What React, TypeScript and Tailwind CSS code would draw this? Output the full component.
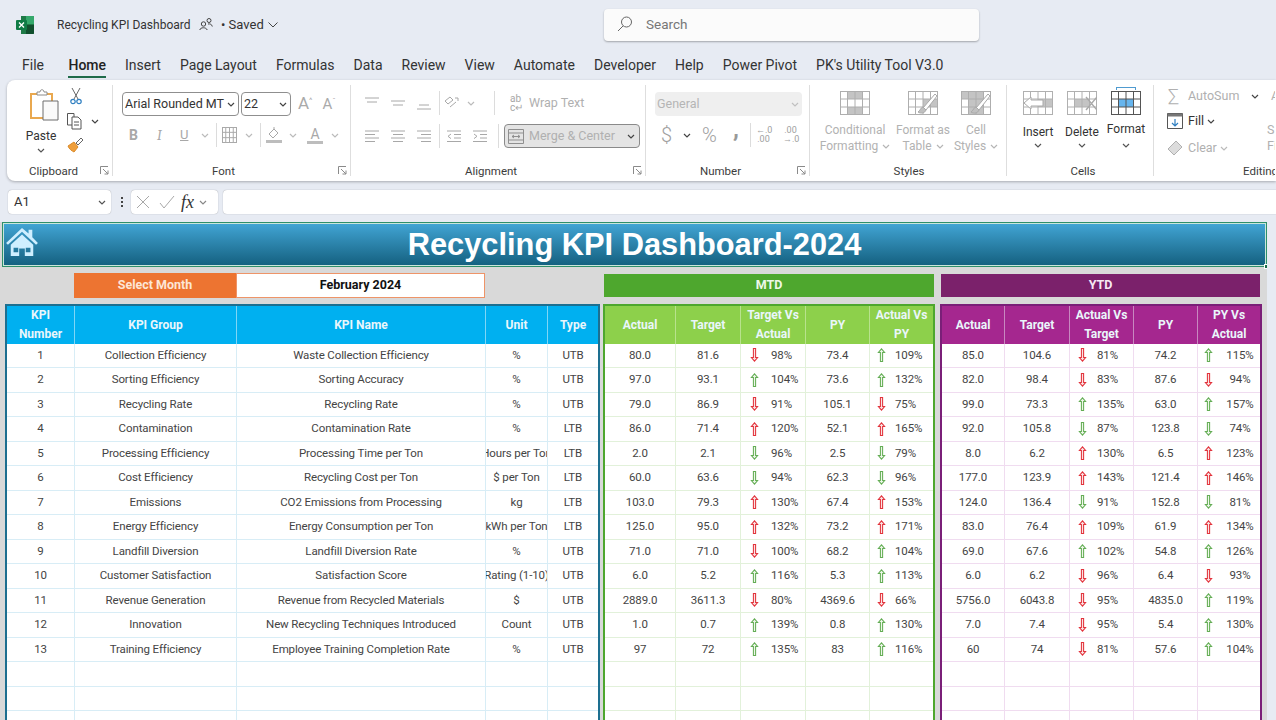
import React from "react";

const Chev = ({ c = "#666", className = "" }: { c?: string; className?: string }) => (
  <svg width="8" height="5" viewBox="0 0 8 5" className={className} fill="none" stroke={c} strokeWidth="1.2">
    <path d="M1 1l3 3 3-3" />
  </svg>
);

const Launcher = ({ className = "" }: { className?: string }) => (
  <svg width="9" height="9" viewBox="0 0 9 9" className={className} fill="none" stroke="#8a8a8a" strokeWidth="1">
    <path d="M.5 8V.5H8M3 3l5 5M8 4.5V8H4.5" />
  </svg>
);

const Lines = ({ kind, c = "#a8a8a8" }: { kind: string; c?: string }) => {
  const paths: Record<string, string> = {
    top: "M1 2h14M3 6h10",
    mid: "M1 5h14M3 9h10",
    bot: "M3 9h10M1 13h14",
    left: "M1 2h14M1 5.5h10M1 9h14M1 12.5h10",
    center: "M1 2h14M3 5.5h10M1 9h14M3 12.5h10",
    right: "M1 2h14M5 5.5h10M1 9h14M5 12.5h10",
    outdent: "M1 2h14M8 5.5h7M8 9h7M1 12.5h14M5 5L2 7.3l3 2.3",
    indent: "M1 2h14M8 5.5h7M8 9h7M1 12.5h14M2 5l3 2.3-3 2.3",
  };
  return (
    <svg width="16" height="15" viewBox="0 0 16 15" fill="none" stroke={c} strokeWidth="1">
      <path d={paths[kind]} />
    </svg>
  );
};

const Cells = ({ fill = [] as number[][], stroke = "#b4b4b4", shade = "#c4c4c4", w = 30, h = 24 }) => {
  const cw = w / 4;
  const ch = h / 3;
  return (
    <svg width={w} height={h} viewBox={`0 0 ${w} ${h}`} fill="none">
      {fill.map(([x, y, sx = 1, sy = 1], i) => (
        <rect key={i} x={x * cw} y={y * ch} width={sx * cw} height={sy * ch} fill={shade} />
      ))}
      <rect x=".5" y=".5" width={w - 1} height={h - 1} stroke={stroke} />
      {[1, 2, 3].map((i) => (
        <path key={i} d={`M${i * cw} 0V${h}`} stroke={stroke} />
      ))}
      {[1, 2].map((i) => (
        <path key={i} d={`M0 ${i * ch}H${w}`} stroke={stroke} />
      ))}
    </svg>
  );
};

const Brush = () => (
  <svg width="30" height="24" viewBox="0 0 30 24" className="-ml-[30px]" fill="none">
    <path d="M27 3L15 17l3 2L29 5z" fill="#fff" stroke="#a9a9a9" />
    <path d="M10 21c2-1 3-5 5-5l3 3c-1 3-5 4-8 2z" fill="#c0c0c0" stroke="#a9a9a9" />
  </svg>
);

const Arrow = ({ dir, good }: { dir: "u" | "d"; good: boolean }) => {
  const c = good ? "#64ad55" : "#e2333c";
  return (
    <svg width="9" height="14" viewBox="0 0 9 14" fill="none" stroke={c} strokeWidth="1.05">
      {dir === "u" ? (
        <path d="M3.4 13.5V4.5H1.4L4.5.8 7.600 4.5H5.600v9z" fill={good ? "#eef7ea" : "#fbe3e3"} />
      ) : (
        <path d="M3.4.5v9H1.4l3.100 3.700L7.600 9.500H5.600v-9z" fill={good ? "#eef7ea" : "#fbe3e3"} />
      )}
    </svg>
  );
};

const BigLabel = ({ lines, c, chev = false }: { lines: string[]; c: string; chev?: boolean }) => (
  <div className="text-center text-[12px] leading-[16px] whitespace-nowrap" style={{ color: c }}>
    {lines.map((l, i) => (
      <div key={i} className="flex items-center justify-center gap-1">
        {l}
        {chev && i === lines.length - 1 && <Chev c="#b5b5b5" />}
      </div>
    ))}
  </div>
);

const Group = ({ className, label, labelClass = "", launcher, children }: { className: string; label: string; labelClass?: string; launcher?: boolean; children: React.ReactNode }) => (
  <div className={`relative shrink-0 h-[91px] flex flex-col border-r border-[#dedede] ${className}`}>
    <div className="h-[79px] shrink-0">{children}</div>
    <div className={`text-center text-[11.5px] leading-[14px] text-[#3c3c3c] ${labelClass}`}>{label}</div>
    {launcher && <Launcher className="absolute right-[3px] bottom-[1px]" />}
  </div>
);

const Ribbon = () => (
  <div className="ml-[7px] h-[101px] shrink-0 bg-white rounded-l-[8px] shadow-[0_1px_3px_rgba(0,0,0,0.28)] flex pt-[5px] overflow-hidden font-['Roboto',sans-serif]">
    {/* Clipboard */}
    <Group className="w-[106px]" label="Clipboard" labelClass="pr-[12px]" launcher>
      <div className="flex h-full">
        <div className="ml-[22px] w-[30px] flex flex-col items-center">
          <svg width="30" height="33" viewBox="0 0 30 33" fill="none" className="mt-[3px]">
            <path d="M2 6h21v24H2z" fill="#fff" stroke="#e9a84f" strokeWidth="2" />
            <path d="M8 7V4h3c0-3 4-3 4 0h3v3z" fill="#fff" stroke="#8c8c8c" />
            <path d="M14 13h15v19H14z" fill="#fafafa" stroke="#6c6c6c" />
          </svg>
          <div className="mt-[7px] mr-[6px] text-[12px] leading-[16px] text-[#333]">Paste</div>
          <Chev className="mt-[4px] mr-[6px]" c="#555" />
        </div>
        <div className="ml-[7px] flex flex-col">
          <svg width="14" height="18" viewBox="0 0 14 18" fill="none" className="mt-[2px] ml-[3px]">
            <path d="M3 1l6 11M11 1L5 12" stroke="#666" />
            <circle cx="4" cy="14.5" r="2.2" stroke="#2f7fc1" strokeWidth="1.2" />
            <circle cx="10" cy="14.5" r="2.2" stroke="#2f7fc1" strokeWidth="1.2" />
          </svg>
          <div className="flex items-center mt-[7px]">
            <svg width="18" height="18" viewBox="0 0 18 18" fill="none" stroke="#555">
              <path d="M6 13H1.5V1.5H8V5" />
              <path d="M6 5h6l3 3v9H6zM8 10h5M8 13h5" />
            </svg>
            <Chev className="ml-[7px]" c="#444" />
          </div>
          <svg width="17" height="17" viewBox="0 0 17 17" fill="none" className="mt-[6px] ml-[1px]">
            <path d="M1 10l6-4 4 5-4 5c-2-1-5-3-6-6z" fill="#ef9f3c" stroke="#d98a2a" />
            <path d="M9 7l5-5 2 2-5 5z" fill="#fff" stroke="#666" />
          </svg>
        </div>
      </div>
    </Group>

    {/* Font */}
    <Group className="w-[238px]" label="Font" labelClass="pr-[16px]" launcher>
      <div className="flex items-center ml-[9px] mt-[7px] h-[24px] text-[12.5px] text-[#333]">
        <div className="w-[117px] h-[24px] border border-[#8f8f8f] rounded-[4px] flex items-center pl-[2px] justify-between pr-[3px] whitespace-nowrap">
          Arial Rounded MT <Chev c="#444" />
        </div>
        <div className="ml-[2px] w-[50px] h-[24px] border border-[#8f8f8f] rounded-[4px] flex items-center pl-[2px] justify-between pr-[3px]">
          22 <Chev c="#444" />
        </div>
        <span className="ml-[7px] text-[17px] text-[#aaa]">A<sup className="text-[8px] -top-[6px]">^</sup></span>
        <span className="ml-[10px] text-[15px] text-[#aaa]">A<sup className="text-[8px] -top-[5px]">ˇ</sup></span>
      </div>
      <div className="flex items-center mt-[7px] h-[24px] text-[#a8a8a8]">
        <span className="ml-[16px] w-[10px] text-[14px] font-bold">B</span>
        <span className="ml-[18px] w-[6px] text-[14px] italic font-serif">I</span>
        <span className="ml-[17px] w-[10px] text-[13px] underline">U</span>
        <Chev className="ml-[11px]" c="#bbb" />
        <div className="ml-[7px] w-px h-[24px] bg-[#dcdcdc]" />
        <div className="ml-[5px]"><Cells w={15} h={16} stroke="#aaa" /></div>
        <Chev className="ml-[8px]" c="#bbb" />
        <div className="ml-[7px] w-px h-[24px] bg-[#dcdcdc]" />
        <svg width="16" height="18" viewBox="0 0 16 18" fill="none" className="ml-[5px]" stroke="#a8a8a8">
          <path d="M3 8l5-5 4 4-5 5zM8 1v3" />
          <path d="M0 14h16v3H0z" fill="#bdbdbd" stroke="none" />
        </svg>
        <Chev className="ml-[7px]" c="#bbb" />
        <div className="ml-[10px] w-[16px] flex flex-col items-center text-[14px] leading-[14px]">
          <span>A</span>
          <span className="w-[16px] h-[3px] bg-[#bdbdbd]" />
        </div>
        <Chev className="ml-[8px]" c="#bbb" />
      </div>
    </Group>

    {/* Alignment */}
    <Group className="w-[295px]" label="Alignment" labelClass="pr-[14px]" launcher>
      <div className="flex items-center mt-[6px] h-[24px]">
        <div className="ml-[13px]"><Lines kind="top" /></div>
        <div className="ml-[10px]"><Lines kind="mid" /></div>
        <div className="ml-[10px]"><Lines kind="bot" /></div>
        <div className="ml-[7px] w-px h-[24px] bg-[#dcdcdc]" />
        <svg width="17" height="16" viewBox="0 0 17 16" fill="none" className="ml-[3px]" stroke="#a8a8a8">
          <path d="M2 6l5-4 3 3-5 4zM7 12l6-5M12 3l3 0 0 3" />
        </svg>
        <Chev className="ml-[7px]" c="#bbb" />
        <div className="ml-[19px] w-px h-[24px] bg-[#dcdcdc]" />
        <span className="ml-[15px] text-[10px] leading-[9px] w-[14px] text-[#a8a8a8]">ab<br />c↵</span>
        <span className="ml-[5px] text-[12.5px] text-[#b0b0b0] whitespace-nowrap">Wrap Text</span>
      </div>
      <div className="flex items-center mt-[9px] h-[24px]">
        <div className="ml-[13px]"><Lines kind="left" /></div>
        <div className="ml-[10px]"><Lines kind="center" /></div>
        <div className="ml-[10px]"><Lines kind="right" /></div>
        <div className="ml-[7px] w-px h-[24px] bg-[#dcdcdc]" />
        <div className="ml-[6px]"><Lines kind="outdent" /></div>
        <div className="ml-[10px]"><Lines kind="indent" /></div>
        <div className="ml-[10px] w-px h-[24px] bg-[#dcdcdc]" />
        <div className="ml-[5px] w-[136px] h-[24px] rounded-[4px] border border-[#8a8a8a] bg-[#e4e4e4] flex items-center pl-[3px] pr-[4px]">
          <svg width="16" height="15" viewBox="0 0 16 15" fill="none" stroke="#8f8f8f">
            <path d="M.5.5h15v14H.5zM.5 4h15M.5 11h15M4 7.5h8M4 7.5l2-1.5M4 7.5L6 9M12 7.500L10 6M12 7.500L10 9" />
          </svg>
          <span className="ml-[5px] text-[12.5px] text-[#b0b0b0] whitespace-nowrap flex-1">Merge &amp; Center</span>
          <Chev c="#444" />
        </div>
      </div>
    </Group>

    {/* Number */}
    <Group className="w-[164px]" label="Number" labelClass="pr-[14px]" launcher>
      <div className="ml-[9px] mt-[7px] w-[147px] h-[24px] rounded-[4px] bg-[#efefef] flex items-center justify-between px-[2px] text-[12.5px] text-[#b5b5b5]">
        General <Chev c="#c0c0c0" className="mr-[1px]" />
      </div>
      <div className="flex items-center mt-[7px] h-[24px] text-[#a0a0a0]">
        <span className="ml-[15px] text-[20px] w-[11px] font-light">$</span>
        <Chev className="ml-[11px]" c="#444" />
        <span className="ml-[11px] text-[20px] w-[17px] font-light">%</span>
        <span className="ml-[14px] w-[6px] text-[24px] leading-[14px] font-bold text-[#999] -translate-y-[6px]">,</span>
        <div className="ml-[11px] w-px h-[24px] bg-[#dcdcdc]" />
        <span className="ml-[5px] text-[9px] leading-[9px] w-[15px] text-center whitespace-nowrap">←.0<br />.00</span>
        <span className="ml-[12px] text-[9px] leading-[9px] w-[15px] text-center whitespace-nowrap">.00<br />→.0</span>
      </div>
    </Group>

    {/* Styles */}
    <Group className="w-[197px]" label="Styles" labelClass="pl-[2px]">
      <div className="flex">
        <div className="w-[90px] flex flex-col items-center">
          <div className="mt-[6px]"><Cells fill={[[1, 0, 2, 1], [1, 2, 2, 1]]} stroke="#aeaeae" /></div>
          <div className="mt-[7px]"><BigLabel lines={["Conditional", "Formatting"]} c="#b2b2b2" chev /></div>
        </div>
        <div className="w-[46px] flex flex-col items-center">
          <div className="mt-[6px] flex">
            <Cells fill={[[2, 1, 2, 1]]} stroke="#aeaeae" />
            <Brush />
          </div>
          <div className="mt-[7px]"><BigLabel lines={["Format as", "Table"]} c="#b2b2b2" chev /></div>
        </div>
        <div className="w-[60px] flex flex-col items-center">
          <div className="mt-[6px] flex">
            <Cells fill={[[0, 0, 3, 1], [1, 1, 2, 2]]} stroke="#aeaeae" />
            <Brush />
          </div>
          <div className="mt-[7px]"><BigLabel lines={["Cell", "Styles"]} c="#b2b2b2" chev /></div>
        </div>
      </div>
    </Group>

    {/* Cells */}
    <Group className="w-[147px]" label="Cells" labelClass="pl-[6px]">
      <div className="flex pl-[9px]">
        {[
          { t: "Insert", f: [[2, 1, 2, 1]], c: "#b0b0b0" },
          { t: "Delete", f: [[1, 1, 2, 1]], c: "#b0b0b0" },
          { t: "Format", f: [[1, 1, 2, 1]], c: "#555" },
        ].map((x, i) => (
          <div key={x.t} className="w-[44px] flex flex-col items-center">
            <div className="relative mt-[6px]">
              <Cells fill={x.f} stroke={x.c} shade={i === 2 ? "#66b5ee" : "#c4c4c4"} />
              {i === 0 && (
                <svg width="30" height="24" viewBox="0 0 30 24" fill="#fff" stroke="#a9a9a9" className="absolute left-0 top-0">
                  <path d="M1 12l7-6v3h12v6H8v3z" />
                </svg>
              )}
              {i === 1 && (
                <svg width="30" height="24" viewBox="0 0 30 24" fill="none" stroke="#a9a9a9" strokeWidth="1.4" className="absolute left-0 top-0">
                  <path d="M19 6l11 13M30 6L19 19" />
                </svg>
              )}
              {i === 2 && <div className="absolute -top-[4px] left-[5px] right-[5px] h-[3px] border-x border-t border-[#4f9bd0]" />}
            </div>
            <div className={i === 2 ? "mt-[6px] text-[12px] leading-[16px] text-[#333]" : "mt-[9px] text-[12px] leading-[16px] text-[#333]"}>{x.t}</div>
            <Chev className={i === 2 ? "mt-[6px]" : "mt-[3px]"} c="#555" />
          </div>
        ))}
      </div>
    </Group>

    {/* Editing */}
    <div className="relative shrink-0 w-[121px] h-[91px] overflow-hidden">
      <div className="flex items-center mt-[3px] h-[16px] text-[12.5px] text-[#b0b0b0]">
        <span className="ml-[14px] text-[18px] leading-[16px] w-[13px] font-light">∑</span>
        <span className="ml-[7px] whitespace-nowrap">AutoSum</span>
        <Chev className="ml-[12px]" c="#444" />
      </div>
      <div className="flex items-center mt-[8px] h-[18px] text-[12.5px] text-[#333]">
        <svg width="16" height="16" viewBox="0 0 16 16" fill="none" className="ml-[13px]">
          <path d="M.5.5h15v15H.5z" stroke="#555" />
          <path d="M.5.5h15v3H.5z" fill="#777" />
          <path d="M8 6v7M5 10l3 3 3-3" stroke="#2f7fc1" strokeWidth="1.2" />
        </svg>
        <span className="ml-[5px]">Fill</span>
        <Chev className="ml-[3px]" c="#444" />
      </div>
      <div className="flex items-center mt-[9px] h-[18px] text-[12.5px] text-[#b0b0b0]">
        <svg width="16" height="16" viewBox="0 0 16 16" fill="none" className="ml-[13px]">
          <path d="M1 9l8-8 6 6-8 8z" fill="#dcdcdc" stroke="#b0b0b0" />
        </svg>
        <span className="ml-[5px]">Clear</span>
        <Chev className="ml-[3px]" c="#bbb" />
      </div>
      <div className="absolute left-[89px] top-[79px] text-[11.5px] leading-[14px] text-[#3c3c3c]">Editing</div>
      <div className="absolute left-[113px] top-[3px] text-[12.5px] leading-[16px] text-[#b0b0b0]">
        <div className="h-[16px] ml-[4px]">A</div>
        <div className="h-[16px] mt-[18px]">S</div>
        <div className="h-[16px]">Fi</div>
      </div>
    </div>
  </div>
);

const left: string[][] = [
  ["1", "Collection Efficiency", "Waste Collection Efficiency", "%", "UTB"],
  ["2", "Sorting Efficiency", "Sorting Accuracy", "%", "UTB"],
  ["3", "Recycling Rate", "Recycling Rate", "%", "UTB"],
  ["4", "Contamination", "Contamination Rate", "%", "LTB"],
  ["5", "Processing Efficiency", "Processing Time per Ton", "Hours per Ton", "LTB"],
  ["6", "Cost Efficiency", "Recycling Cost per Ton", "$ per Ton", "LTB"],
  ["7", "Emissions", "CO2 Emissions from Processing", "kg", "LTB"],
  ["8", "Energy Efficiency", "Energy Consumption per Ton", "kWh per Ton", "LTB"],
  ["9", "Landfill Diversion", "Landfill Diversion Rate", "%", "UTB"],
  ["10", "Customer Satisfaction", "Satisfaction Score", "Rating (1-10)", "UTB"],
  ["11", "Revenue Generation", "Revenue from Recycled Materials", "$", "UTB"],
  ["12", "Innovation", "New Recycling Techniques Introduced", "Count", "UTB"],
  ["13", "Training Efficiency", "Employee Training Completion Rate", "%", "UTB"],
];

const mtd: string[][] = [
  ["80.0", "81.6", "rd", "98%", "73.4", "gu", "109%"],
  ["97.0", "93.1", "gu", "104%", "73.6", "gu", "132%"],
  ["79.0", "86.9", "rd", "91%", "105.1", "rd", "75%"],
  ["86.0", "71.4", "ru", "120%", "52.1", "ru", "165%"],
  ["2.0", "2.1", "gd", "96%", "2.5", "gd", "79%"],
  ["60.0", "63.6", "gd", "94%", "62.3", "gd", "96%"],
  ["103.0", "79.3", "ru", "130%", "67.4", "ru", "153%"],
  ["125.0", "95.0", "ru", "132%", "73.2", "ru", "171%"],
  ["71.0", "71.0", "rd", "100%", "68.2", "gu", "104%"],
  ["6.0", "5.2", "gu", "116%", "5.3", "gu", "113%"],
  ["2889.0", "3611.3", "rd", "80%", "4369.6", "rd", "66%"],
  ["1.0", "0.7", "gu", "139%", "0.8", "gu", "130%"],
  ["97", "72", "gu", "135%", "83", "gu", "116%"],
];

const ytd: string[][] = [
  ["85.0", "104.6", "rd", "81%", "74.2", "gu", "115%"],
  ["82.0", "98.4", "rd", "83%", "87.6", "rd", "94%"],
  ["99.0", "73.3", "gu", "135%", "63.0", "gu", "157%"],
  ["92.0", "105.8", "gd", "87%", "123.8", "gd", "74%"],
  ["8.0", "6.2", "ru", "130%", "6.5", "ru", "123%"],
  ["177.0", "123.9", "ru", "143%", "121.4", "ru", "146%"],
  ["124.0", "136.4", "gd", "91%", "152.8", "gd", "81%"],
  ["83.0", "76.4", "ru", "109%", "61.9", "ru", "134%"],
  ["69.0", "67.6", "gu", "102%", "54.8", "gu", "126%"],
  ["6.0", "6.2", "rd", "96%", "6.4", "rd", "93%"],
  ["5756.0", "6043.8", "rd", "95%", "4835.0", "gu", "119%"],
  ["7.0", "7.4", "rd", "95%", "5.4", "gu", "130%"],
  ["60", "74", "rd", "81%", "57.6", "gu", "104%"],
];

const EMPTY_ROWS = [0, 1, 2];

const HeadCell = ({ text, sep }: { text: string[]; sep: string }) => (
  <div className={`flex flex-col items-center justify-center text-center text-[12px] tracking-normal leading-[19px] font-bold text-[#eaf6fb] border-r last:border-r-0 ${sep}`}>
    {text.map((t) => (
      <div key={t} className="whitespace-nowrap">{t}</div>
    ))}
  </div>
);

const Cell = ({ children, line }: { children?: React.ReactNode; line: string }) => (
  <div className={`h-[24.5px] flex items-center justify-center overflow-hidden whitespace-nowrap border-r border-b last:border-r-0 ${line}`}>
    {children}
  </div>
);

const ArrowCell = ({ code, pct, line, pad, gap, centered }: { code: string; pct: string; line: string; pad: string; gap: string; centered?: boolean }) => (
  <div className={`h-[24.5px] flex items-center border-r border-b last:border-r-0 ${pad} ${line}`}>
    <Arrow dir={code[1] as "u" | "d"} good={code[0] === "g"} />
    <span className={centered ? `w-[38px] text-center ${gap}` : gap}>{pct}</span>
  </div>
);

const Metrics = ({ rows, heads, grid, border, head, sep, line, pads, gaps, last }: {
  rows: string[][]; heads: string[][]; grid: string; border: string; head: string; sep: string; line: string; pads: string[]; gaps: string[]; last?: boolean;
}) => (
  <div className={`flex-1 border-x-2 border-t-2 bg-white ${border}`}>
    <div className={`grid h-[37.5px] ${grid} ${head}`}>
      {heads.map((h) => <HeadCell key={h.join()} text={h} sep={sep} />)}
    </div>
    {rows.map((r, i) => (
      <div key={i} className={`grid ${grid}`}>
        <Cell line={line}>{r[0]}</Cell>
        <Cell line={line}>{r[1]}</Cell>
        <ArrowCell code={r[2]} pct={r[3]} line={line} pad={pads[0]} gap={gaps[0]} />
        <Cell line={line}>{r[4]}</Cell>
        <ArrowCell code={r[5]} pct={r[6]} line={line} pad={pads[1]} gap={gaps[1]} centered={last} />
      </div>
    ))}
    {EMPTY_ROWS.map((i) => (
      <div key={i} className={`grid ${grid}`}>
        {[0, 1, 2, 3, 4].map((j) => <Cell key={j} line={line} />)}
      </div>
    ))}
  </div>
);

const Sheet = () => (
  <div className="w-[1267px] flex-1 min-h-0 bg-[#d9d9d9] overflow-hidden font-['Roboto',sans-serif] text-[11.5px] tracking-[-0.12px] text-[#444]">
    <div className="relative ml-[2px] h-[45px] pt-[1px] border border-[#2f8f6a] outline outline-1 outline-[#c9e6da] -outline-offset-2 bg-gradient-to-b from-[#42a6d6] to-[#13607f] flex items-center justify-center tracking-normal">
      <svg width="34" height="30" viewBox="0 0 36 32" className="absolute left-[2px] top-[4px]" fill="#cfefff">
        <path d="M18 1L1 17l2 2L18 5l15 14 2-2-6-6V3h-4v4z" />
        <path d="M6 19L18 8l12 11v12H21v-8h-6v8H6zM9 22v5h5v-5zM22 22v5h5v-5z" fillRule="evenodd" />
      </svg>
      <h1 className="text-[30.8px] leading-none font-bold text-white font-['Liberation_Sans',sans-serif] whitespace-nowrap">Recycling KPI Dashboard-2024</h1>
      <div className="absolute -right-[3px] -bottom-[3px] w-[5px] h-[5px] bg-[#1b6b4a] border border-white" />
    </div>

    <div className="flex mt-[6px] pl-[5px]">
      {/* Left */}
      <div className="w-[595px] shrink-0">
        <div className="ml-[69px] w-[411px] h-[25px] flex font-bold text-[12.5px] tracking-normal">
          <div className="w-[162px] bg-[#ed7431] text-[#fde6d6] flex items-center justify-center">Select Month</div>
          <div className="flex-1 bg-white border border-[#ee9468] text-[#111] flex items-center justify-center">February 2024</div>
        </div>
        <div className="mt-[6px] border-x-2 border-t-2 border-[#1d6f90] bg-white">
          <div className="grid h-[37.5px] grid-cols-[68px_162px_249px_62px_50px] bg-[#00b0f0]">
            {[["KPI", "Number"], ["KPI Group"], ["KPI Name"], ["Unit"], ["Type"]].map((h) => (
              <HeadCell key={h.join()} text={h} sep="border-[#7fd6f6]" />
            ))}
          </div>
          {left.map((r) => (
            <div key={r[0]} className="grid grid-cols-[68px_162px_249px_62px_50px]">
              {r.map((c, j) => <Cell key={j} line="border-[#d8edf6]">{c}</Cell>)}
            </div>
          ))}
          {EMPTY_ROWS.map((i) => (
            <div key={i} className="grid grid-cols-[68px_162px_249px_62px_50px]">
              {[0, 1, 2, 3, 4].map((j) => <Cell key={j} line="border-[#d8edf6]" />)}
            </div>
          ))}
        </div>
      </div>

      {/* MTD */}
      <div className="ml-[3px] w-[332px] shrink-0 flex flex-col">
        <div className="mx-[1px] mt-[1px] h-[23px] bg-[#4ea72e] text-[12.5px] tracking-normal text-[#eef8e8] font-bold flex items-center justify-center">MTD</div>
        <div className="mt-[7px] flex-1 flex">
          <Metrics
            rows={mtd}
            heads={[["Actual"], ["Target"], ["Target Vs", "Actual"], ["PY"], ["Actual Vs", "PY"]]}
            grid="grid-cols-[71px_65px_65px_64px_63px]"
            border="border-[#4ea72e]"
            head="bg-[#8dd04b]"
            sep="border-[#b8e28d]"
            line="border-[#e2f1da]"
            pads={["pl-[9px]", "pl-[7px]"]}
            gaps={["ml-[12px]", "ml-[9px]"]}
          />
        </div>
      </div>

      {/* YTD */}
      <div className="ml-[5px] w-[322px] shrink-0 flex flex-col">
        <div className="mx-[1px] mt-[1px] mr-[2px] h-[23px] bg-[#7b216b] text-[12.5px] tracking-normal text-[#f6e9f4] font-bold flex items-center justify-center">YTD</div>
        <div className="mt-[7px] flex-1 flex">
          <Metrics
            rows={ytd}
            heads={[["Actual"], ["Target"], ["Actual Vs", "Target"], ["PY"], ["PY Vs", "Actual"]]}
            grid="grid-cols-[63px_65px_64px_64px_62px]"
            border="border-[#7a1f78]"
            head="bg-[#a5278f]"
            sep="border-[#c888c0]"
            line="border-[#f0dcf0]"
            pads={["pl-[8px]", "pl-[6px]"]}
            gaps={["ml-[10px]", "ml-[8px]"]}
            last
          />
        </div>
      </div>
    </div>
  </div>
);

export default function App() {
  const tabs = ["File", "Home", "Insert", "Page Layout", "Formulas", "Data", "Review", "View", "Automate", "Developer", "Help", "Power Pivot", "PK's Utility Tool V3.0"];
  return (
    <div className="w-[1276px] h-[720px] overflow-hidden bg-[#e7ebf3] flex flex-col font-['Roboto',sans-serif] text-[#333]">
      {/* Title bar */}
      <div className="h-[49px] shrink-0 flex items-start">
        <svg width="18" height="18" viewBox="0 0 18 18" className="ml-[16px] mt-[16px] shrink-0">
          <path d="M5 0h12a1 1 0 011 1v16a1 1 0 01-1 1H5z" fill="#1f7a47" />
          <path d="M10 0h7a1 1 0 011 1v7h-8z" fill="#35a86b" />
          <path d="M10 9h8v8a1 1 0 01-1 1h-7z" fill="#114f2d" />
          <rect x="0" y="4" width="11" height="10" rx="1" fill="#0f7b45" />
          <path d="M3 6.5l5 5M8 6.5l-5 5" stroke="#fff" strokeWidth="1.3" />
        </svg>
        <span className="ml-[23px] mt-[17px] w-[134px] text-[12px] leading-[16px] whitespace-nowrap">Recycling KPI Dashboard</span>
        <svg width="14" height="14" viewBox="0 0 14 14" fill="none" stroke="#444" className="ml-[8px] mt-[17px] shrink-0">
          <circle cx="4.5" cy="7" r="2.2" />
          <path d="M.8 13c.4-3 6.6-3 7.4 0" />
          <circle cx="10" cy="3.5" r="2" />
          <path d="M9 7c2-.5 4 .5 4.300 2.500" />
        </svg>
        <span className="ml-[8px] mt-[17px] w-[43px] text-[13px] leading-[16px] whitespace-nowrap">• Saved</span>
        <svg width="10" height="6" viewBox="0 0 10 6" fill="none" stroke="#444" className="ml-[4px] mt-[22px] shrink-0"><path d="M.5.5L5 5 9.500.5" /></svg>
        <div className="ml-[326px] mt-[9px] w-[375px] h-[32px] shrink-0 bg-[#fbfbfb] rounded-[4px] shadow-[0_1px_2px_rgba(0,0,0,0.3)] flex items-center pb-[2px]">
          <svg width="16" height="16" viewBox="0 0 16 16" fill="none" stroke="#666" className="ml-[13px]">
            <circle cx="9.500" cy="6" r="5" />
            <path d="M6 10l-5 5" />
          </svg>
          <span className="ml-[13px] text-[13.5px] text-[#777]">Search</span>
        </div>
      </div>

      {/* Tabs */}
      <div className="h-[31px] shrink-0 flex items-start pl-[22px] gap-[19px] text-[14px]">
        {tabs.map((t) => (
          <div key={t} className={t === "Home" ? "relative h-[30px] pt-[6px] leading-[20px] font-medium text-[#222] whitespace-nowrap" : t === "File" ? "mr-[5.5px] h-[30px] pt-[6px] leading-[20px] whitespace-nowrap" : "h-[30px] pt-[6px] leading-[20px] whitespace-nowrap"}>
            {t}
            {t === "Home" && <div className="absolute left-0 right-0 bottom-[1px] h-[2px] bg-[#1f6b4a]" />}
          </div>
        ))}
      </div>

      <Ribbon />

      {/* Formula bar */}
      <div className="h-[41px] shrink-0 flex items-start pt-[9px] text-[13px]">
        <div className="ml-[8px] w-[103px] h-[24px] bg-white rounded-[4px] shadow-[0_0_1px_rgba(0,0,0,0.4)] flex items-center justify-between pl-[6px] pr-[5px]">
          A1 <Chev c="#555" />
        </div>
        <div className="ml-[9px] w-[3px] h-[24px] flex flex-col items-center justify-center gap-[2px]">
          <i className="w-[2px] h-[2px] bg-[#444]" /><i className="w-[2px] h-[2px] bg-[#444]" /><i className="w-[2px] h-[2px] bg-[#444]" />
        </div>
        <div className="ml-[8px] w-[87px] h-[24px] bg-white rounded-[4px] shadow-[0_0_1px_rgba(0,0,0,0.4)] flex items-center pl-[5px]">
          <svg width="14" height="14" viewBox="0 0 14 14" fill="none" stroke="#a8a8a8"><path d="M1 1l12 12M13 1L1 13" /></svg>
          <svg width="16" height="14" viewBox="0 0 16 14" fill="none" stroke="#a8a8a8" className="ml-[9px]"><path d="M1 8l4 5L15 1" /></svg>
          <span className="ml-[6px] font-['Liberation_Serif',serif] italic text-[18px] text-[#333]">fx</span>
          <Chev c="#888" className="ml-[5px]" />
        </div>
        <div className="ml-[5px] flex-1 h-[24px] bg-white rounded-l-[4px] shadow-[0_0_1px_rgba(0,0,0,0.4)]" />
      </div>

      <Sheet />
    </div>
  );
}
